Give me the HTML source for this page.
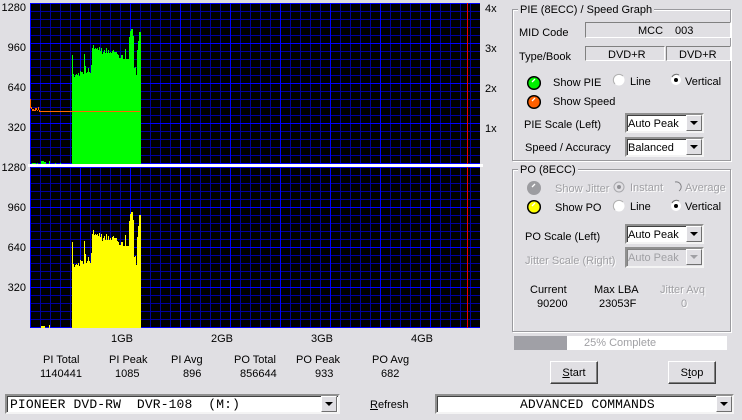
<!DOCTYPE html>
<html><head><meta charset="utf-8"><style>
html,body{margin:0;padding:0;background:#e0dfe3}
#p{position:relative;width:742px;height:420px;overflow:hidden;background:#e0dfe3;font:11px/12px "Liberation Sans",sans-serif;color:#000}
.t{position:absolute;white-space:nowrap;margin-top:1px}
.d{color:#a0a0a4;text-shadow:1px 1px 0 #fff}
.g{position:absolute;box-sizing:border-box;border:1px solid #9a9a9e;box-shadow:1px 1px 0 #fff,inset 1px 1px 0 #fff}
.gt{position:absolute;background:#e0dfe3;padding:0 2px;white-space:nowrap;margin-top:1px}
.f{position:absolute;box-sizing:border-box;border-style:solid;border-width:1px;border-color:#808080 #fff #fff #808080}
.cb{position:absolute;box-sizing:border-box;background:#fff;border:2px solid;border-color:#909090 #f4f4f4 #f4f4f4 #909090;box-shadow:inset 1px 1px 0 #404040;line-height:18px;padding-left:1px;white-space:pre}
.cb.dis{background:#e0dfe3;color:#a0a0a4;box-shadow:inset 1px 1px 0 #808080}
.ab{position:absolute;right:0;top:0;width:16px;height:16px;box-sizing:border-box;background:#e0dfe3;border:1px solid;border-color:#fff #707070 #707070 #fff}
.ab:after{content:"";position:absolute;left:3px;top:5px;border:4px solid transparent;border-top:4px solid #000;border-bottom:0}
.dis .ab:after{border-top-color:#a0a0a4}
.m{font:13px/17px "Liberation Mono",monospace;letter-spacing:.13px}
.b{position:absolute;box-sizing:border-box;background:#e0dfe3;border:1px solid;border-color:#fff #404040 #404040 #fff;box-shadow:inset -1px -1px 0 #808080;text-align:center;line-height:22px}
u{text-decoration:underline}
</style></head><body><div id="p">
<svg width="742" height="420" style="position:absolute;left:0;top:0" shape-rendering="crispEdges">
<defs>
<pattern id="a" patternUnits="userSpaceOnUse" x="30" y="3" width="10" height="8"><rect width="10" height="8" fill="#000"/><rect width="1" height="8" fill="#0000a0"/><rect width="10" height="1" fill="#0000a0"/></pattern>
<pattern id="b" patternUnits="userSpaceOnUse" x="30" y="167" width="10" height="8"><rect width="10" height="8" fill="#000"/><rect width="1" height="8" fill="#0000a0"/><rect width="10" height="1" fill="#0000a0"/></pattern>
</defs>
<rect x="30" y="3" width="450" height="161" fill="url(#a)"/>
<rect x="30" y="167" width="450" height="161" fill="url(#b)"/>
<path fill="#0000ff" d="M30 3h1v161h-1zM80 3h1v161h-1zM130 3h1v161h-1zM180 3h1v161h-1zM230 3h1v161h-1zM280 3h1v161h-1zM330 3h1v161h-1zM380 3h1v161h-1zM430 3h1v161h-1zM30 3h450v1h-450zM30 43h450v1h-450zM30 83h450v1h-450zM30 123h450v1h-450zM30 163h450v1h-450z"/>
<path fill="#0000ff" d="M30 167h1v161h-1zM80 167h1v161h-1zM130 167h1v161h-1zM180 167h1v161h-1zM230 167h1v161h-1zM280 167h1v161h-1zM330 167h1v161h-1zM380 167h1v161h-1zM430 167h1v161h-1zM30 167h450v1h-450zM30 207h450v1h-450zM30 247h450v1h-450zM30 287h450v1h-450zM30 327h450v1h-450z"/>
<rect x="467" y="3" width="1" height="161" fill="#f00000"/>
<rect x="467" y="167" width="1" height="161" fill="#f00000"/>
<rect x="28" y="164" width="455" height="3" fill="#fff"/>
<path fill="#00ff00" d="M72 164V55h1V74h1V77h1V75h1V74h1V75h1V73h1V76h1V71h1V72h1V72h1V74h1V54h1V66h1V73h1V72h1V68h1V72h1V73h1V65h1V48h1V45h1V49h1V48h1V49h1V48h1V50h1V47h1V51h1V48h1V54h1V52h1V50h1V53h1V48h1V53h1V50h1V53h1V52h1V53h1V51h1V50h1V52h1V52h1V52h1V54h1V55h1V58h1V58h1V55h1V55h1V59h1V59h1V49h1V59h1V59h1V59h1V37h1V31h1V29h1V29h1V36h1V68h1V67h1V75h1V50h1V41h1V32h1V32h1V164Z"/>
<path fill="#00ff00" d="M32 163h4v1h-4zM37 163h1v1h-1zM41 161h3v3h-3zM44 162h2v2h-2zM49 161h1v3h-1zM55 163h1v1h-1zM60 163h1v1h-1z"/>
<path fill="#ffff00" d="M72 328V242h1V264h1V267h1V265h1V264h1V265h1V263h1V266h1V260h1V261h1V261h1V264h1V241h1V254h1V263h1V261h1V257h1V261h1V263h1V253h1V234h1V230h1V235h1V234h1V235h1V234h1V236h1V233h1V237h1V234h1V241h1V238h1V236h1V240h1V234h1V240h1V236h1V240h1V238h1V240h1V237h1V236h1V238h1V238h1V238h1V241h1V242h1V245h1V245h1V242h1V242h1V246h1V246h1V235h1V246h1V246h1V246h1V221h1V214h1V212h1V212h1V220h1V257h1V256h1V265h1V237h1V226h1V215h1V215h1V328Z"/>
<path fill="#ffff00" d="M41 326h4v2h-4zM49 325h1v3h-1z"/>
<path fill="#ff6600" d="M30 99h1v9h-1zM31 107h1v2h-1zM32 109h2v2h-2zM34 110h2v1h-2zM35 108h1v2h-1zM36 108h1v2h-1zM37 110h1v1h-1zM38 107h1v3h-1zM39 110h1v1h-1zM39 111h101v1h-101z"/>
</svg>

<span class="t" style="right:716px;top:1px">1280</span>
<span class="t" style="right:716px;top:41px">960</span>
<span class="t" style="right:716px;top:81px">640</span>
<span class="t" style="right:716px;top:121px">320</span>
<span class="t" style="right:716px;top:161px">1280</span>
<span class="t" style="right:716px;top:201px">960</span>
<span class="t" style="right:716px;top:241px">640</span>
<span class="t" style="right:716px;top:281px">320</span>
<span class="t" style="left:485px;top:2px">4x</span>
<span class="t" style="left:485px;top:42px">3x</span>
<span class="t" style="left:485px;top:82px">2x</span>
<span class="t" style="left:485px;top:122px">1x</span>

<span class="t" style="left:111px;top:332px">1GB</span>
<span class="t" style="left:211px;top:332px">2GB</span>
<span class="t" style="left:311px;top:332px">3GB</span>
<span class="t" style="left:411px;top:332px">4GB</span>

<span class="t" style="left:43px;top:353px">PI Total</span>
<span class="t" style="left:40px;top:367px">1140441</span>
<span class="t" style="left:109px;top:353px">PI Peak</span>
<span class="t" style="left:115px;top:367px">1085</span>
<span class="t" style="left:171px;top:353px">PI Avg</span>
<span class="t" style="left:183px;top:367px">896</span>
<span class="t" style="left:234px;top:353px">PO Total</span>
<span class="t" style="left:240px;top:367px">856644</span>
<span class="t" style="left:296px;top:353px">PO Peak</span>
<span class="t" style="left:315px;top:367px">933</span>
<span class="t" style="left:372px;top:353px">PO Avg</span>
<span class="t" style="left:381px;top:367px">682</span>

<div class="g" style="left:512px;top:9px;width:219px;height:152px"></div>
<span class="gt" style="left:518px;top:3px">PIE (8ECC) / Speed Graph</span>
<span class="t" style="left:519px;top:26px">MID Code</span>
<div class="f" style="left:585px;top:22px;width:146px;height:16px"></div>
<span class="t" style="left:638px;top:24px">MCC</span>
<span class="t" style="left:675px;top:24px">003</span>
<span class="t" style="left:519px;top:50px">Type/Book</span>
<div class="f" style="left:585px;top:46px;width:80px;height:15px"></div>
<div class="f" style="left:666px;top:46px;width:65px;height:15px"></div>
<span class="t" style="left:608px;top:48px">DVD+R</span>
<span class="t" style="left:679px;top:48px">DVD+R</span>

<svg width="742" height="420" style="position:absolute;left:0;top:0">
<g stroke="#000" stroke-width="1.5">
<circle cx="534" cy="83" r="6.3" fill="#00f000"/>
<circle cx="534" cy="102" r="6.3" fill="#ff6000"/>
<circle cx="534" cy="207" r="6.3" fill="#ffff00"/>
</g>
<circle cx="534" cy="188" r="7" fill="#9c9ca0"/>
<g stroke="#fff" stroke-width="1.3" fill="none">
<path d="M532 82l3-3"/><path d="M532 101l3-3"/><path d="M532 187l3-3"/><path d="M532 206l3-3"/>
</g>
<g>
<circle cx="619" cy="80" r="5.5" fill="#fff"/><path d="M615 84a5.5 5.5 0 0 1 8-8" fill="none" stroke="#b0b0b0"/>
<circle cx="619" cy="206" r="5.5" fill="#fff"/><path d="M615 210a5.5 5.5 0 0 1 8-8" fill="none" stroke="#b0b0b0"/>
<circle cx="676" cy="80" r="5" fill="#fff"/><path d="M672 77a5 5 0 0 1 7-2" fill="none" stroke="#707070"/><circle cx="676" cy="80" r="2" fill="#000"/>
<circle cx="676" cy="206" r="5" fill="#fff"/><path d="M672 203a5 5 0 0 1 7-2" fill="none" stroke="#707070"/><circle cx="676" cy="206" r="2" fill="#000"/>
<circle cx="619" cy="187" r="5" fill="#e0dfe3" stroke="#a8a8ac"/><circle cx="619" cy="187" r="2" fill="#909094"/>
<path d="M675 182a5 5 0 0 1 4 9" fill="none" stroke="#808084"/>
</g>
</svg>

<span class="t" style="left:553px;top:76px">Show PIE</span>
<span class="t" style="left:630px;top:75px">Line</span>
<span class="t" style="left:685px;top:75px">Vertical</span>
<span class="t" style="left:553px;top:95px">Show Speed</span>
<span class="t" style="left:524px;top:118px">PIE Scale (Left)</span>
<div class="cb" style="left:625px;top:113px;width:79px;height:20px">Auto Peak<div class="ab"></div></div>
<span class="t" style="left:525px;top:141px">Speed / Accuracy</span>
<div class="cb" style="left:625px;top:137px;width:79px;height:20px">Balanced<div class="ab"></div></div>

<div class="g" style="left:512px;top:169px;width:219px;height:163px"></div>
<span class="gt" style="left:518px;top:163px">PO (8ECC)</span>
<span class="t d" style="left:555px;top:182px">Show Jitter</span>
<span class="t d" style="left:630px;top:181px">Instant</span>
<span class="t d" style="left:685px;top:181px">Average</span>
<span class="t" style="left:555px;top:201px">Show PO</span>
<span class="t" style="left:630px;top:200px">Line</span>
<span class="t" style="left:685px;top:200px">Vertical</span>
<span class="t" style="left:525px;top:230px">PO Scale (Left)</span>
<div class="cb" style="left:625px;top:224px;width:79px;height:20px">Auto Peak<div class="ab"></div></div>
<span class="t d" style="left:525px;top:254px">Jitter Scale (Right)</span>
<div class="cb dis" style="left:625px;top:247px;width:79px;height:21px">Auto Peak<div class="ab"></div></div>
<span class="t" style="left:530px;top:283px">Current</span>
<span class="t" style="left:537px;top:297px">90200</span>
<span class="t" style="left:594px;top:283px">Max LBA</span>
<span class="t" style="left:599px;top:297px">23053F</span>
<span class="t d" style="left:660px;top:283px">Jitter Avq</span>
<span class="t d" style="left:681px;top:297px">0</span>

<div style="position:absolute;left:514px;top:336px;width:213px;height:14px;background:#fff"></div>
<div style="position:absolute;left:514px;top:336px;width:53px;height:14px;background:#a0a0a6"></div>
<span class="t" style="left:584px;top:336px;color:#a0a0a4">25% Complete</span>

<div class="b" style="left:550px;top:361px;width:48px;height:23px"><u>S</u>tart</div>
<div class="b" style="left:668px;top:361px;width:48px;height:23px">S<u>t</u>op</div>

<div class="cb m" style="left:5px;top:394px;width:335px;height:20px;padding-left:3px">PIONEER DVD-RW  DVR-108  (M:)<div class="ab" style="right:1px;top:0"></div></div>
<span class="t" style="left:370px;top:398px"><u>R</u>efresh</span>
<div class="cb m" style="left:435px;top:394px;width:299px;height:20px"><span style="position:absolute;left:83px;top:0">ADVANCED COMMANDS</span><div class="ab" style="right:0;top:0"></div></div>
</div></body></html>
